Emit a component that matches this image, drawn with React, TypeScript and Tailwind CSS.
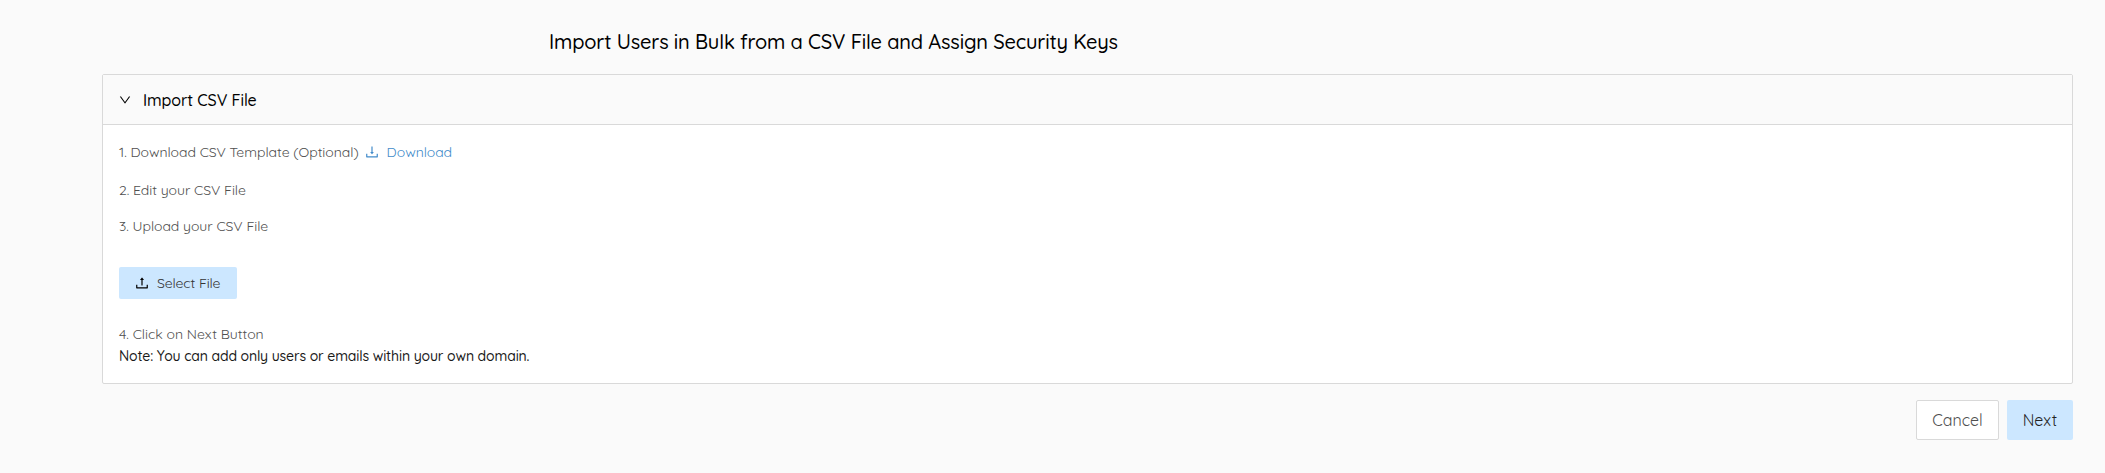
import type { ReactNode } from "react";
import { AiOutlineDown, AiOutlineDownload, AiOutlineUpload } from "react-icons/ai";

const ICON_VIEW_BOX = "64 64 896 896";

function Step({ className, children }: { className: string; children: ReactNode }) {
  return (
    <p className={`flex h-[22px] items-center text-[14px] leading-[22px] whitespace-nowrap ${className}`}>
      {children}
    </p>
  );
}

export default function App() {
  return (
    <main className="flex h-[473px] flex-col bg-[#fafafa] pr-8 pl-[102px] font-[Quicksand,Lato,sans-serif] font-normal text-[#505050]">
      <h1 className="mt-[26px] ml-[447px] h-8 text-[20px] leading-8 font-medium tracking-[-0.16px] whitespace-nowrap text-black">
        Import Users in Bulk from a CSV File and Assign Security Keys
      </h1>

      <section className="mt-4 flex h-[310px] flex-col rounded-[2px] border border-[#d9d9d9] bg-white">
        <header className="flex h-[50px] shrink-0 items-center border-b border-[#d9d9d9] bg-[#fafafa] pl-4 text-black">
          <AiOutlineDown viewBox={ICON_VIEW_BOX} className="size-3" />
          <h2 className="ml-3 text-[16px] leading-6 font-medium tracking-[-0.1px]">Import CSV File</h2>
        </header>

        <div className="flex flex-col items-start pl-4">
          <Step className="mt-4 tracking-[-0.04px]">
            <span>1. Download CSV Template (Optional)</span>
            <a className="ml-[6px] flex items-center text-[#428bca]">
              <AiOutlineDownload viewBox={ICON_VIEW_BOX} className="size-[14px]" />
              <span className="ml-2">Download</span>
            </a>
          </Step>
          <Step className="mt-4 tracking-[-0.04px]">2. Edit your CSV File</Step>
          <Step className="mt-[14px] tracking-[-0.04px]">3. Upload your CSV File</Step>
          <button className="mt-[30px] flex h-8 w-[118px] items-center rounded-[2px] bg-[#cce7ff] pl-4 text-[14px] tracking-[-0.1px] text-[#333]">
            <AiOutlineUpload viewBox={ICON_VIEW_BOX} className="size-[14px] text-black" />
            <span className="ml-2 whitespace-nowrap">Select File</span>
          </button>
          <Step className="mt-6 tracking-[-0.02px]">4. Click on Next Button</Step>
          <Step className="font-medium tracking-[-0.14px] text-[#1a1a1a]">
            Note: You can add only users or emails within your own domain.
          </Step>
        </div>
      </section>

      <footer className="mt-4 flex justify-end gap-2 text-[16px]">
        <button className="h-10 w-[83px] rounded-[2px] border border-[#d9d9d9] bg-white">Cancel</button>
        <button className="h-10 w-[66px] rounded-[2px] bg-[#cce7ff] text-[#222]">Next</button>
      </footer>
    </main>
  );
}
